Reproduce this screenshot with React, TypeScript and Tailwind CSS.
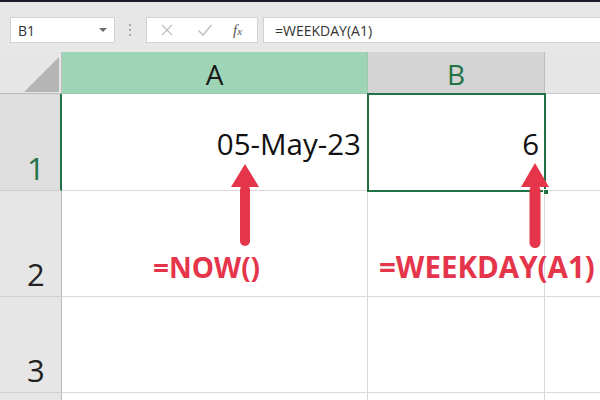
const font = { fontFamily: '"Open Sans", "Noto Sans", sans-serif' };

function Arrow({ x, tip, base, end, head, shaft }: { x: number; tip: number; base: number; end: number; head: number; shaft: number }) {
  return (
    <g fill="#e5354b">
      <polygon points={`${x},${tip} ${x - head},${base} ${x + head},${base}`} />
      <rect x={x - shaft / 2} y={base - 2} width={shaft} height={end - base + 2} rx={shaft / 2} />
    </g>
  );
}

function FormulaBar() {
  return (
    <div className="flex h-[50px] items-start bg-[#e7e7e7] pt-[15px]">
      <div className="ml-[10px] flex h-[26px] w-[105px] items-center justify-between border border-[#d2d2d2] bg-white pl-[7px] pr-[7px] text-[14px] text-[#333]">
        <span>B1</span>
        <svg width="8" height="5" viewBox="0 0 8 5">
          <polygon points="0,0 8,0 4,4" fill="#6b6b6b" />
        </svg>
      </div>
      <div className="ml-[14px] mr-[15px] flex h-[26px] flex-col items-center justify-center gap-[3px]">
        <span className="h-[2px] w-[2px] bg-[#a8a8a8]" />
        <span className="h-[2px] w-[2px] bg-[#a8a8a8]" />
        <span className="h-[2px] w-[2px] bg-[#a8a8a8]" />
      </div>
      <div className="flex h-[26px] w-[112px] items-center border border-[#d2d2d2] bg-white pl-[12px]">
        <svg width="14" height="14" viewBox="0 0 14 14" className="ml-[1px]">
          <path d="M2 2 L12 12 M12 2 L2 12" stroke="#c2c2c2" strokeWidth="1.4" />
        </svg>
        <svg width="16" height="14" viewBox="0 0 16 14" className="ml-[23px]">
          <path d="M1.5 7.5 L6 12 L14.5 2" stroke="#c2c2c2" strokeWidth="1.6" fill="none" />
        </svg>
        <span className="ml-[20px] text-[15px] italic text-[#555]" style={{ fontFamily: '"Liberation Serif", serif' }}>
          f<span className="text-[11px]">x</span>
        </span>
      </div>
      <div className="ml-[5px] flex h-[26px] flex-1 items-center border border-r-0 border-[#d2d2d2] bg-white pl-[11px] text-[14px] text-[#333]">
        =WEEKDAY(A1)
      </div>
    </div>
  );
}

function RowHead({ n, active }: { n: string; active?: boolean }) {
  return (
    <div
      className={`flex items-end border-b border-[#cfcfcf] pb-[6px] pl-[27px] text-[31px] leading-none ${
        active ? 'border-r-2 border-r-[#217346] bg-[#dedede] text-[#217346]' : 'border-r border-r-[#bdbdbd] bg-[#e6e6e6] text-[#222]'
      }`}
    >
      {n}
    </div>
  );
}

function Cell({ children }: { children?: React.ReactNode }) {
  return (
    <div className="flex items-center justify-end border-b border-r border-[#d9d9d9] bg-white pr-[6px] pt-[4px] text-[29.5px] text-[#111]">
      {children}
    </div>
  );
}

export default function App() {
  return (
    <div className="relative flex h-[400px] w-[600px] flex-col overflow-hidden bg-white" style={font}>
      <div className="h-[2px] bg-[#1e1b2e]" />
      <FormulaBar />

      <div className="grid flex-1 grid-cols-[62px_306px_177px_1fr] grid-rows-[42px_97px_106px_96px_1fr] bg-[#e7e7e7]">
        {/* corner */}
        <div className="border-b border-r border-[#bdbdbd] bg-[#e6e6e6]">
          <svg width="62" height="42" viewBox="0 0 62 42">
            <polygon points="24,40 59,40 59,5" fill="#b5b5b5" />
          </svg>
        </div>
        <div className="flex items-center justify-center border-b border-r border-[#9cc7ad] bg-[#9fd5b7] pt-[2px] text-[28px] text-[#1a1a1a]">
          A
        </div>
        <div className="flex items-center justify-center border-b border-r border-[#bdbdbd] bg-[#d4d4d4] pt-[2px] text-[28px] text-[#217346]">
          B
        </div>
        <div className="border-b border-[#c9c9c9] bg-[#e6e6e6]" />

        {/* row 1 */}
        <RowHead n="1" active />
        <Cell>05-May-23</Cell>
        <div className="relative flex items-center justify-end bg-white pr-[6px] pt-[4px] text-[29.5px] text-[#111]">
          <div className="absolute -left-px -top-px -bottom-px -right-px border-2 border-[#217346]" />
          <div className="absolute -bottom-[4px] -right-[4px] h-[6px] w-[6px] border border-white bg-[#217346]" />
          6
        </div>
        <div className="border-b border-[#d9d9d9] bg-white" />

        {/* row 2 */}
        <RowHead n="2" />
        <Cell />
        <Cell />
        <div className="border-b border-[#d9d9d9] bg-white" />

        {/* row 3 */}
        <RowHead n="3" />
        <Cell />
        <Cell />
        <div className="border-b border-[#d9d9d9] bg-white" />

        {/* row 4 */}
        <div className="border-r border-[#bdbdbd] bg-[#e6e6e6]" />
        <div className="border-r border-[#d9d9d9] bg-white" />
        <div className="border-r border-[#d9d9d9] bg-white" />
        <div className="bg-white" />
      </div>

      {/* callouts */}
      <svg className="pointer-events-none absolute left-0 top-0" width="600" height="400" viewBox="0 0 600 400">
        <Arrow x={245} tip={164} base={187} end={246} head={14} shaft={10} />
        <Arrow x={535} tip={163} base={187} end={248} head={14} shaft={11} />
      </svg>
      <div className="absolute left-[153px] top-[253px] text-[28px] font-bold leading-none text-[#e5354b]">=NOW()</div>
      <div className="absolute left-[379px] top-[252px] text-[29.5px] font-bold leading-none text-[#e5354b]">=WEEKDAY(A1)</div>
    </div>
  );
}
